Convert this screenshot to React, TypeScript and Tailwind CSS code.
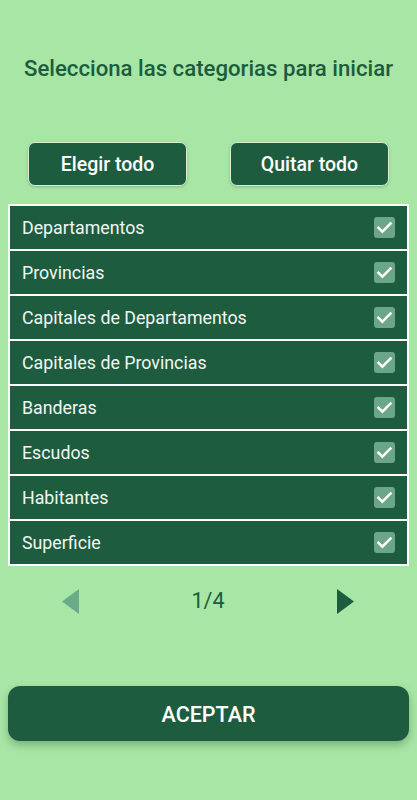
import React from "react";

const items = [
  "Departamentos",
  "Provincias",
  "Capitales de Departamentos",
  "Capitales de Provincias",
  "Banderas",
  "Escudos",
  "Habitantes",
  "Superficie",
];

function Check() {
  return (
    <div className="w-[21px] h-[21px] rounded-[3px] bg-[#6aa687] flex items-center justify-center">
      <svg width="17" height="17" viewBox="0 0 24 24" fill="none">
        <path d="M3.5 12.5l5.5 5.5L20.5 6.5" stroke="#ffffff" strokeWidth="3.6" strokeLinecap="square" />
      </svg>
    </div>
  );
}

export default function App() {
  return (
    <div
      className="w-[417px] h-[800px] bg-[#a8e6a6] flex flex-col"
      style={{ fontFamily: "Roboto, 'Noto Sans', sans-serif" }}
    >
      <div className="pt-[54px] h-[142px] text-center text-[22.2px] leading-[28px] text-[#1c5c3e] font-medium">
        Selecciona las categorias para iniciar
      </div>
      <div className="flex justify-between px-[28px]">
        <button className="w-[159px] h-[44px] pt-[2px] rounded-[7px] bg-[#1e5c40] border border-[#d8eed6] text-white text-[19.5px] font-medium shadow-[0_1px_3px_rgba(0,0,0,0.2)]">
          Elegir todo
        </button>
        <button className="w-[159px] h-[44px] pt-[2px] rounded-[7px] bg-[#1e5c40] border border-[#d8eed6] text-white text-[19.5px] font-medium shadow-[0_1px_3px_rgba(0,0,0,0.2)]">
          Quitar todo
        </button>
      </div>
      <div className="mx-[8px] mt-[18px] border-2 border-white bg-white flex flex-col gap-[2px]">
        {items.map((t) => (
          <div key={t} className="h-[43px] bg-[#1e5c40] flex items-center justify-between pl-[12px] pr-[12px]">
            <span className="text-[17.8px] text-[#f2f7f2] pt-[1px]">{t}</span>
            <Check />
          </div>
        ))}
      </div>
      <div className="flex items-center justify-between h-[70px] px-[62px]">
        <svg width="17" height="25" viewBox="0 0 17 25">
          <polygon points="17,0 17,25 0,12.5" fill="#6aab8a" />
        </svg>
        <span className="text-[21.5px] text-[#1c5c3e] pt-[1px]">1/4</span>
        <svg width="17" height="25" viewBox="0 0 17 25" className="mr-[1px]">
          <polygon points="0,0 0,25 17,12.5" fill="#1e5c40" />
        </svg>
      </div>
      <div className="px-[8px] mt-[50px]">
        <button className="w-full h-[55px] pt-[3px] rounded-[12px] bg-[#1e5c40] text-white text-[21.5px] font-medium shadow-[0_4px_8px_rgba(0,60,20,0.3)]">
          ACEPTAR
        </button>
      </div>
    </div>
  );
}
